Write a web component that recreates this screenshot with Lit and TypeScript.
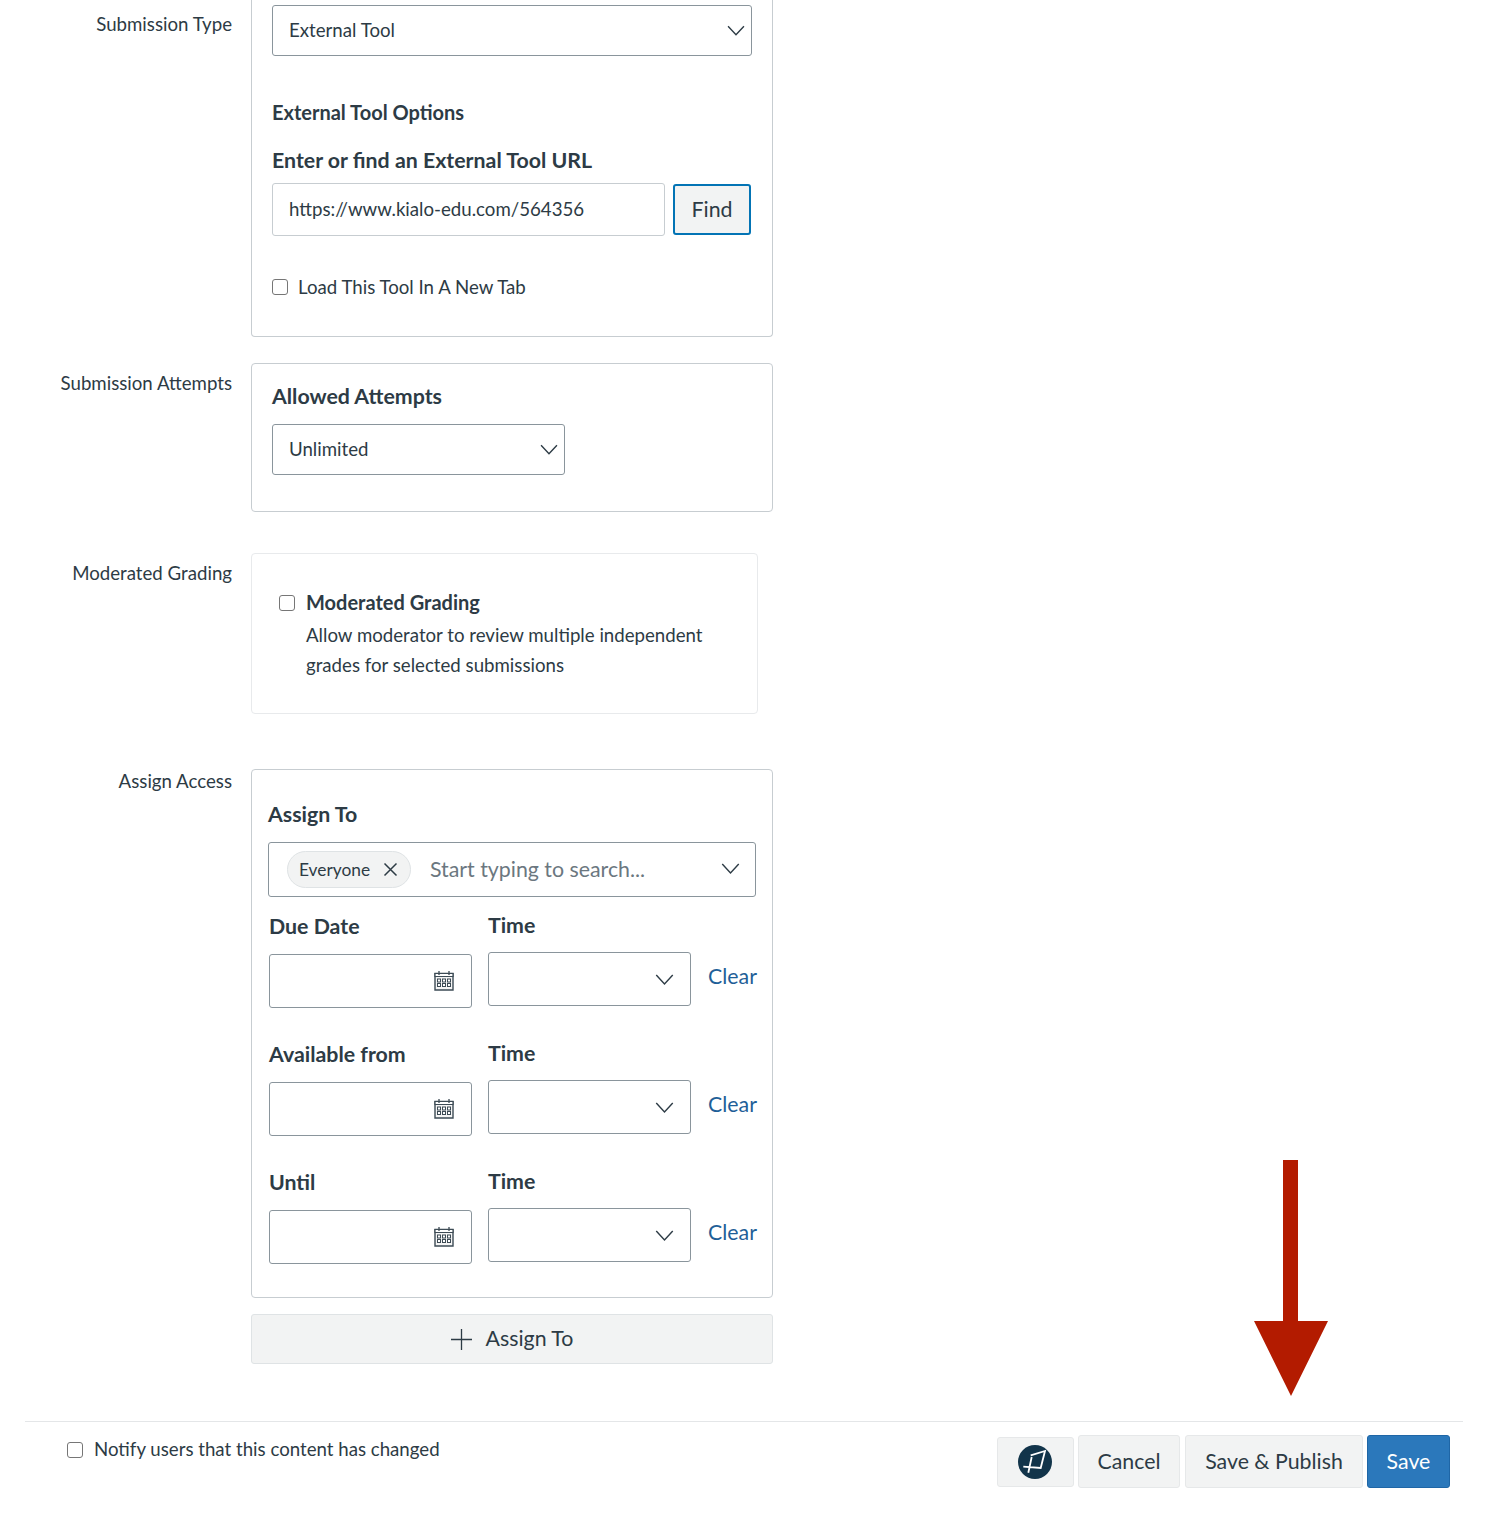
import { LitElement, html, css, svg } from "lit";
import { customElement } from "lit/decorators.js";

const chevron = (w = 17) => html`<svg class="chev" width="${w}" height="${Math.round(w * 0.6)}" viewBox="0 0 17 10"><path d="M1 1l7.500 8L16 1" fill="none" stroke="#2d3b45" stroke-width="1.300"/></svg>`;
const cal = html`<svg class="cal" width="20" height="21" viewBox="0 0 20 21" fill="none">
  <path d="M1 3.500h18v16.500H1z" fill="#f5f5f5" stroke="#3d4b55" stroke-width="1.400"/>
  <path d="M1 3.500h18v3H1z" fill="#fff" stroke="#3d4b55" stroke-width="1.200"/>
  <path d="M5 1v4M15 1v4" stroke="#3d4b55" stroke-width="1.300"/>
  ${[3.5, 8.5, 13.5].map((x) => [9, 13.5].map((y) => svg`<rect x="${x}" y="${y}" width="3" height="3" fill="#fff" stroke="#3d4b55" stroke-width="1"/>`))}
</svg>`;

@customElement("app-root")
export class AppRoot extends LitElement {
  static styles = css`
    :host { display: block; position: relative; height: 1516px; background: #fff; color: #2d3b45; font-family: Lato, "Liberation Sans", sans-serif; font-size: 18.67px; overflow: hidden; }
    * { box-sizing: border-box; }
    .row { display: grid; grid-template-columns: 232px 522px; column-gap: 19px; }
    .lbl { text-align: right; line-height: 24px; }
    .box { border: 1px solid #c7cdd1; border-radius: 4px; }
    .r1 .lbl { padding-top: 12px; }
    .r1 .box { height: 337px; padding: 5px 20px 0; border-top: 0; border-radius: 0 0 4px 4px; }
    .select { height: 51px; border: 1px solid #8a959c; border-radius: 3px; display: flex; align-items: center; justify-content: space-between; padding: 0 6px 0 16px; background: #fff; }
    .select span { margin-top: -1px; }
    .h { font-weight: 700; line-height: 24px; }
    .h1 { margin-top: 44px; font-size: 20px; }
    .h2 { margin-top: 24px; font-size: 21.33px; }
    .urlrow { display: flex; margin-top: 11px; gap: 8px; align-items: flex-start; }
    .url { width: 393px; height: 53px; border: 1px solid #c7cdd1; border-radius: 3px; display: flex; align-items: center; padding: 0 0 2px 16px; }
    .find { width: 78px; height: 51px; margin-top: 1px; background: #f2f3f3; border: 2px solid #0374b5; border-radius: 3px; display: flex; align-items: center; justify-content: center; font-size: 21.33px; padding-bottom: 2px; }
    .cb { width: 16px; height: 16px; border: 1.500px solid #767676; border-radius: 3px; background: #fff; flex: none; }
    .chk { display: flex; align-items: center; gap: 10px; margin-top: 39px; line-height: 24px; }
    .r2 { margin-top: 26px; }
    .r2 .lbl { padding-top: 8px; }
    .r2 .box { height: 149px; padding: 20px 20px 0; }
    .r2 .h { font-size: 21.33px; }
    .r2 .select { width: 293px; margin-top: 16px; }
    .r3 { margin-top: 41px; }
    .r3 .lbl { padding-top: 8px; }
    .r3 .box { width: 507px; height: 161px; padding: 37px 0 0 27px; border-color: #e8eaec; display: flex; gap: 11px; }
    .r3 .cb { margin-top: 4px; }
    .r3 .h { font-size: 20px; margin-top: -1px; }
    .r3 p { margin: 6px 0 0; line-height: 30px; width: 420px; }
    .r4 { margin-top: 55px; }
    .r4 .lbl { padding-top: 0; }
    .r4 .box { height: 529px; padding: 31px 16px 0; }
    .r4 .title { font-size: 21.33px; font-weight: 700; line-height: 26px; margin-bottom: 15px; }
    .search { width: 488px; height: 55px; border: 1px solid #8a959c; border-radius: 3px; display: flex; align-items: center; padding: 0 15px 0 18px; }
    .pill { width: 124px; height: 37px; border: 1px solid #dfe3e5; border-radius: 19px; background: #f2f3f3; font-size: 17.33px; display: flex; align-items: center; gap: 13px; padding: 0 0 1px 11px; flex: none; }
    .ph { margin: -2px 0 0 19px; color: #6b7780; font-size: 21.33px; flex: 1; }
    .search .chev { margin-top: -2px; }
    .group { height: 128px; margin-left: 1px; display: grid; grid-template-columns: 203px 203px auto; column-gap: 16px; }
    .dl { font-size: 21.33px; font-weight: 700; line-height: 26px; padding-top: 16px; }
    .field { height: 54px; border: 1px solid #8a959c; border-radius: 3px; display: flex; align-items: center; justify-content: flex-end; }
    .col1 .field { margin-top: 15px; padding-right: 17px; }
    .col2 .dl { padding-top: 15px; }
    .col2 .field { margin-top: 14px; padding-right: 16px; }
    .clear { color: #1f5f98; font-size: 21.33px; margin-left: 1px; padding-top: 66px; line-height: 26px; }
    .cal { display: block; margin-top: -1px; }
    .add { margin: 16px 0 0 251px; width: 522px; height: 50px; background: #f2f3f3; border: 1px solid #dfe3e5; border-radius: 3px; display: flex; align-items: center; justify-content: center; gap: 14px; font-size: 21.33px; }
    .add span { margin-top: -2px; }
    .foot { margin: 57px 35px 0 25px; border-top: 1px solid #e4e6e8; height: 95px; display: flex; justify-content: space-between; padding: 13px 13px 0 42px; }
    .notify { display: flex; gap: 11px; align-items: center; height: 28px; }
    .notify .cb { margin-top: 1px; }
    .btns { display: flex; gap: 5px; align-items: flex-start; }
    .btn { height: 53px; background: #f2f3f3; border: 1px solid #e6e8e9; border-radius: 3px; display: flex; align-items: center; justify-content: center; font-size: 21.33px; padding-bottom: 2px; }
    .logo { width: 77px; height: 50px; margin-top: 2px; margin-right: -1px; padding: 0 2px 0 0; }
    .cancel { width: 102px; }
    .pub { width: 178px; }
    .save { width: 83px; background: #2b78bb; border-color: #1f66a6; color: #fff; margin-left: -1px; }
    .arrow { position: absolute; left: 1254px; top: 1160px; display: block; }
  `;

  private group(label: string) {
    return html`<div class="group">
      <div class="col1"><div class="dl">${label}</div><div class="field">${cal}</div></div>
      <div class="col2"><div class="dl">Time</div><div class="field">${chevron(19)}</div></div>
      <div class="clear">Clear</div>
    </div>`;
  }

  render() {
    return html`
      <div class="row r1">
        <div class="lbl">Submission Type</div>
        <div class="box">
          <div class="select"><span>External Tool</span>${chevron(18)}</div>
          <div class="h h1">External Tool Options</div>
          <div class="h h2">Enter or find an External Tool URL</div>
          <div class="urlrow"><div class="url">https://www.kialo-edu.com/564356</div><div class="find">Find</div></div>
          <div class="chk"><span class="cb"></span>Load This Tool In A New Tab</div>
        </div>
      </div>
      <div class="row r2">
        <div class="lbl">Submission Attempts</div>
        <div class="box">
          <div class="h">Allowed Attempts</div>
          <div class="select"><span>Unlimited</span>${chevron(18)}</div>
        </div>
      </div>
      <div class="row r3">
        <div class="lbl">Moderated Grading</div>
        <div class="box">
          <span class="cb"></span>
          <div><div class="h">Moderated Grading</div><p>Allow moderator to review multiple independent grades for selected submissions</p></div>
        </div>
      </div>
      <div class="row r4">
        <div class="lbl">Assign Access</div>
        <div class="box">
          <div class="title">Assign To</div>
          <div class="search">
            <div class="pill"><span>Everyone</span><svg width="15" height="15" viewBox="0 0 15 15"><path d="M1.500 1.500l12 12M13.500 1.500l-12 12" stroke="#2d3b45" stroke-width="1.500"/></svg></div>
            <span class="ph">Start typing to search...</span>
            ${chevron(19)}
          </div>
          ${this.group("Due Date")}${this.group("Available from")}${this.group("Until")}
        </div>
      </div>
      <div class="add"><svg width="21" height="21" viewBox="0 0 21 21"><path d="M10.500 0v21M0 10.500h21" stroke="#2d3b45" stroke-width="1.300"/></svg><span>Assign To</span></div>
      <div class="foot">
        <div class="notify"><span class="cb"></span>Notify users that this content has changed</div>
        <div class="btns">
          <div class="btn logo"><svg width="34" height="34" viewBox="0 0 34 34"><circle cx="17" cy="17" r="17" fill="#12344a"/><path d="M12.700 10.300L27 6 22.700 23 5.300 21.700M13.700 12L10.300 27.700" fill="none" stroke="#fff" stroke-width="1.800"/></svg></div>
          <div class="btn cancel">Cancel</div>
          <div class="btn pub">Save &amp; Publish</div>
          <div class="btn save">Save</div>
        </div>
      </div>
      <svg class="arrow" width="74" height="236" viewBox="0 0 74 236"><path d="M29 0h15v161H74L37 236 0 161h29z" fill="#b31b00"/></svg>
    `;
  }
}
